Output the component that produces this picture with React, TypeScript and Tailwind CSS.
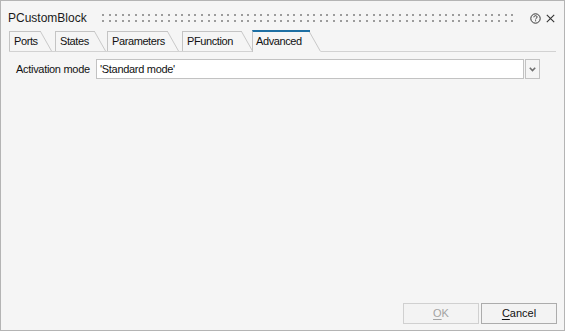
import React from "react";

const tabs = [
  { label: "Ports", box: "w-[31px]", gap: "ml-0" },
  { label: "States", box: "w-[39px]", gap: "ml-[3px]" },
  { label: "Parameters", box: "w-[60px]", gap: "ml-px" },
  { label: "PFunction", box: "w-[59px]", gap: "ml-[3px]" },
  { label: "Advanced", box: "w-[57px]", gap: "-ml-px" },
];
const activeTab = "Advanced";

function Grip() {
  const dots = [];
  for (let i = 0; i < 63; i++) {
    const x = Math.round(i * 6.6);
    dots.push(<rect key={"a" + i} x={x} y={0} width={2} height={2} fill="#9c9c9c" />);
    dots.push(<rect key={"b" + i} x={x} y={6} width={2} height={2} fill="#9c9c9c" />);
  }
  return (
    <svg width="417" height="8" className="shrink-0">
      {dots}
    </svg>
  );
}

function Tab({ label, box, gap, active }: { label: string; box: string; gap: string; active: boolean }) {
  return (
    <div
      className={
        active
          ? `relative z-10 flex h-[22px] -mb-px bg-[#f5f5f5] ${gap}`
          : `flex h-[20px] ${gap}`
      }
    >
      <div
        className={
          active
            ? `${box} border-l border-t-2 border-l-[#c4c4c4] border-t-[#1d6fa3] pl-[3px] text-[11px] tracking-[-0.4px] leading-[19px] text-[#111] whitespace-nowrap`
            : `${box} border-l border-t border-[#c4c4c4] pl-[4px] text-[11px] tracking-[-0.4px] leading-[19px] text-[#111] whitespace-nowrap`
        }
      >
        {label}
      </div>
      <svg width="12" height={active ? 22 : 20} className="shrink-0">
        <polygon
          points={active ? "0,0 0.5,0 12,22 0,22" : "0,0 0.5,0 12,20 0,20"}
          fill="#f5f5f5"
        />
        {active ? (
          <>
            <line x1="0" y1="1" x2="1" y2="1" stroke="#1d6fa3" strokeWidth="2" />
            <line x1="0.5" y1="2" x2="11.5" y2="21.5" stroke="#c8c8c8" strokeWidth="1" />
          </>
        ) : (
          <>
            <line x1="0" y1="0.5" x2="1" y2="0.5" stroke="#c4c4c4" strokeWidth="1" />
            <line x1="0.5" y1="0.5" x2="11.5" y2="20" stroke="#c8c8c8" strokeWidth="1" />
          </>
        )}
      </svg>
    </div>
  );
}

export default function App() {
  return (
    <div
      className="w-[565px] h-[331px] border border-[#b4b4b4] bg-[#f5f5f5] flex flex-col overflow-hidden"
      style={{ fontFamily: '"Liberation Sans", Arial, sans-serif' }}
    >
      {/* header */}
      <div className="h-[30px] pt-[4px] flex items-center shrink-0">
        <div className="w-[101px] pl-[7px] text-[12px] leading-[14px] text-[#1a1a1a] whitespace-nowrap">
          PCustomBlock
        </div>
        <Grip />
        <svg width="11" height="11" viewBox="0 0 11 11" className="ml-[11px] shrink-0">
          <circle cx="5.5" cy="5.5" r="4.7" fill="none" stroke="#333" strokeWidth="1" />
          <path
            d="M3.9 4.3 C3.9 3.2 4.7 2.7 5.5 2.7 C6.4 2.7 7.1 3.3 7.1 4.1 C7.1 5.2 5.6 5.2 5.6 6.4"
            fill="none"
            stroke="#333"
            strokeWidth="1"
          />
          <rect x="5.1" y="7.3" width="1" height="1" fill="#333" />
        </svg>
        <svg width="9" height="9" viewBox="0 0 9 9" className="ml-[5px] shrink-0">
          <path d="M0.8 0.8 L8.2 8.2 M8.2 0.8 L0.8 8.2" stroke="#333" strokeWidth="1.1" />
        </svg>
      </div>

      {/* tabs */}
      <div className="h-[20px] pl-[8px] flex items-end shrink-0">
        {tabs.map((t) => (
          <Tab key={t.label} label={t.label} box={t.box} gap={t.gap} active={t.label === activeTab} />
        ))}
      </div>

      {/* panel */}
      <div className="flex-1 mx-[8px] border-t border-[#d2d2d2] pt-[7px] pl-[7px]">
        <div className="flex items-center h-[20px]">
          <div className="w-[80px] text-[11px] tracking-[-0.3px] text-[#111] whitespace-nowrap">Activation mode</div>
          <div className="w-[428px] h-[20px] border border-[#c2c2c2] bg-white pl-[3px] text-[11px] tracking-[-0.3px] leading-[18px] text-[#111]">
            'Standard mode'
          </div>
          <div className="w-[15px] h-[20px] ml-px border border-[#c2c2c2] bg-[#f5f5f5] flex items-center justify-center">
            <svg width="7" height="5" viewBox="0 0 7 5">
              <path d="M0.8 0.8 L3.5 3.6 L6.2 0.8" fill="none" stroke="#707070" strokeWidth="1.6" />
            </svg>
          </div>
        </div>
      </div>

      {/* footer */}
      <div className="flex justify-end gap-[2px] pr-[7px] pb-[6px] shrink-0">
        <button className="w-[76px] h-[21px] border border-[#d0d0d0] bg-[#f3f3f3] text-[11px] text-[#a3a3a3] flex items-center justify-center">
          <span>
            <span className="underline underline-offset-2">O</span>K
          </span>
        </button>
        <button className="w-[76px] h-[21px] border border-[#acacac] bg-[#f3f3f3] text-[11px] text-[#111] flex items-center justify-center">
          <span>
            <span className="underline underline-offset-2">C</span>ancel
          </span>
        </button>
      </div>
    </div>
  );
}
